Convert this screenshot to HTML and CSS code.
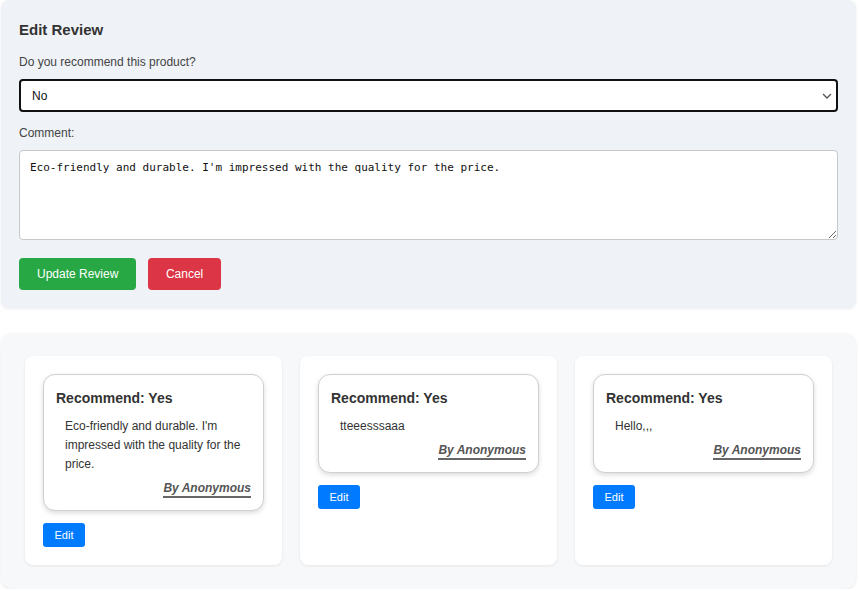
FILE: index.html
```html
<!DOCTYPE html>
<html>
<head>
<meta charset="utf-8">
<link rel="stylesheet" href="styles.css">
</head>
<body>
<section class="edit-panel">
  <h2 class="edit-title">Edit Review</h2>
  <label class="field-label">Do you recommend this product?</label>
  <div class="select-wrap">
    <select class="select"><option>No</option><option>Yes</option></select>
    <svg class="chevron" width="10" height="6" viewBox="0 0 10 6"><path d="M1 1 L5 5 L9 1" fill="none" stroke="#555" stroke-width="1.3"/></svg>
  </div>
  <label class="field-label">Comment:</label>
  <textarea class="textarea">Eco-friendly and durable. I'm impressed with the quality for the price.</textarea>
  <div class="actions">
    <button class="btn btn-green">Update Review</button>
    <button class="btn btn-red">Cancel</button>
  </div>
</section>

<section class="reviews-panel">
  <div class="card">
    <div class="review">
      <h4 class="review-title">Recommend: Yes</h4>
      <p class="review-text">Eco-friendly and durable. I'm impressed with the quality for the price.</p>
      <div class="review-by"><span>By Anonymous</span></div>
    </div>
    <button class="btn-edit">Edit</button>
  </div>
  <div class="card">
    <div class="review">
      <h4 class="review-title">Recommend: Yes</h4>
      <p class="review-text">tteeesssaaa</p>
      <div class="review-by"><span>By Anonymous</span></div>
    </div>
    <button class="btn-edit">Edit</button>
  </div>
  <div class="card">
    <div class="review">
      <h4 class="review-title">Recommend: Yes</h4>
      <p class="review-text">Hello,,,</p>
      <div class="review-by"><span>By Anonymous</span></div>
    </div>
    <button class="btn-edit">Edit</button>
  </div>
</section>
</body>
</html>
```

FILE: styles.css
```css
* { box-sizing: border-box; }
html, body { margin: 0; padding: 0; background: #ffffff; }
body {
  font-family: "Liberation Sans", Arial, sans-serif;
  color: #333;
  padding: 0 3px 0 1px;
}

.edit-panel {
  background: #eff2f7;
  border-radius: 8px;
  padding: 18px 18px 18px 18px;
  box-shadow: 0 1px 3px rgba(0,0,0,0.08);
}
.edit-title {
  font-size: 15px;
  line-height: 18px;
  font-weight: bold;
  margin: 3px 0 16px;
  color: #333;
}
.field-label {
  display: block;
  font-size: 12px;
  line-height: 14px;
  color: #444;
  margin-bottom: 10px;
}
.select-wrap {
  position: relative;
  margin-bottom: 14px;
}
.select {
  display: block;
  width: 100%;
  height: 33px;
  appearance: none;
  -webkit-appearance: none;
  background: #fff;
  border: 2px solid #111;
  border-radius: 4px;
  padding: 0 11px;
  font-family: "Liberation Sans", Arial, sans-serif;
  font-size: 12px;
  color: #111;
  outline: none;
}
.chevron {
  position: absolute;
  right: 6px;
  top: 14px;
}
.textarea {
  display: block;
  width: 100%;
  height: 90px;
  border: 1px solid #c8c8c8;
  border-radius: 4px;
  background: #fff;
  padding: 9px 10px;
  font-family: "DejaVu Sans Mono", "Liberation Mono", monospace;
  font-size: 11px;
  line-height: 15px;
  color: #111;
  margin: 0 0 18px;
  resize: vertical;
}
.actions {
  display: flex;
  gap: 12px;
}
.btn {
  height: 32px;
  border: none;
  border-radius: 4px;
  padding: 0 18px;
  font-family: "Liberation Sans", Arial, sans-serif;
  font-size: 12px;
  color: #fff;
}
.btn-green { background: #28a745; }
.btn-red { background: #dc3545; padding: 0 17.5px; }

.reviews-panel {
  margin-top: 25px;
  background: #f7f8fa;
  border-radius: 12px;
  padding: 23px 24px 24px;
  display: grid;
  grid-template-columns: repeat(3, 1fr);
  gap: 18px;
  box-shadow: 0 1px 3px rgba(0,0,0,0.1);
}
.card {
  background: #fff;
  border-radius: 8px;
  padding: 18px;
  height: 209px;
  box-shadow: 0 1px 3px rgba(0,0,0,0.08);
}
.review {
  border: 1px solid #d0d0d0;
  border-radius: 12px;
  padding: 15px 12px 12px 12px;
  box-shadow: 0 2px 5px rgba(0,0,0,0.14);
  background: #fff;
}
.review-title {
  margin: 0 0 11px;
  font-size: 14px;
  line-height: 16px;
  font-weight: bold;
  color: #333;
}
.review-text {
  margin: 0 0 4px;
  padding: 0 0 0 9px;
  font-size: 12px;
  line-height: 19px;
  color: #333;
}
.review-by {
  text-align: right;
}
.review-by span {
  display: inline-block;
  font-size: 12px;
  line-height: 15px;
  font-weight: bold;
  font-style: italic;
  color: #555;
  border-bottom: 2px solid #666;
}
.btn-edit {
  display: block;
  margin-top: 12px;
  height: 24px;
  padding: 0 11.5px;
  border: none;
  border-radius: 3px;
  background: #007bff;
  color: #fff;
  font-family: "Liberation Sans", Arial, sans-serif;
  font-size: 11px;
}
```
